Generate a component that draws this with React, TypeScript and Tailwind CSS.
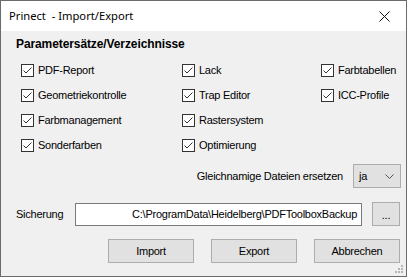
import { useState } from "react";

type Option = { label: string; checked: boolean };

const columns: Option[][] = [
  [
    { label: "PDF-Report", checked: true },
    { label: "Geometriekontrolle", checked: true },
    { label: "Farbmanagement", checked: true },
    { label: "Sonderfarben", checked: true },
  ],
  [
    { label: "Lack", checked: true },
    { label: "Trap Editor", checked: true },
    { label: "Rastersystem", checked: true },
    { label: "Optimierung", checked: true },
  ],
  [
    { label: "Farbtabellen", checked: true },
    { label: "ICC-Profile", checked: true },
  ],
];

function CheckBox({ label, checked }: Option) {
  const [on, setOn] = useState(checked);

  return (
    <label className="flex h-[25px] cursor-default items-center gap-[4px]">
      <span
        onClick={() => setOn(!on)}
        className="flex h-[13px] w-[13px] items-center justify-center border border-[#333333] bg-white"
      >
        {on ? (
          <svg width="11" height="11" viewBox="0 0 11 11">
            <path
              d="M1.5 5.5 L4 8 L9.5 2.5"
              fill="none"
              stroke="#333333"
              strokeWidth="1"
            />
          </svg>
        ) : null}
      </span>
      <span>{label}</span>
    </label>
  );
}

function WinButton({ label, width }: { label: string; width: string }) {
  return (
    <button
      type="button"
      className={`flex h-[24px] ${width} items-center justify-center border border-[#adadad] bg-[#e1e1e1] text-black hover:border-[#0078d7] hover:bg-[#e5f1fb]`}
    >
      {label}
    </button>
  );
}

export default function App() {
  return (
    <div
      className="relative flex h-[277px] w-[407px] flex-col border border-[#6b6b6b] bg-[#f0f0f0] text-[11px] tracking-[-0.25px] text-black"
      style={{ fontFamily: '"Liberation Sans", Arial, sans-serif' }}
    >
      <div className="flex h-[30px] items-center justify-between bg-white pl-[8px] pr-[16px]">
        <span
          className="text-[11.2px] tracking-normal text-black"
          style={{ fontFamily: '"Noto Sans", "Open Sans", sans-serif' }}
        >
          Prinect&nbsp; - Import/Export
        </span>
        <svg width="11" height="11" viewBox="0 0 11 11">
          <path d="M0.5 0.5 L10.5 10.5 M10.5 0.5 L0.5 10.5" stroke="#111111" strokeWidth="1" />
        </svg>
      </div>

      <div className="flex flex-col pl-[15px] pr-[5px] pt-[6px]">
        <h2 className="h-[14px] text-[12px] font-bold leading-[14px] tracking-[-0.1px]">
          Parametersätze/Verzeichnisse
        </h2>

        <div className="ml-[5px] mt-[7px] grid grid-cols-[161px_139px_auto]">
          {columns.map((col, i) => (
            <div key={i} className="flex flex-col">
              {col.map((opt) => (
                <CheckBox key={opt.label} {...opt} />
              ))}
            </div>
          ))}
        </div>

        <div className="mt-[6px] flex items-center justify-end gap-[10px]">
          <span>Gleichnamige Dateien ersetzen</span>
          <div className="flex h-[24px] w-[48px] items-center justify-between border border-[#adadad] bg-[#e1e1e1] pl-[5px] pr-[6px]">
            <span>ja</span>
            <svg width="9" height="5" viewBox="0 0 9 5">
              <path d="M0.5 0.5 L4.5 4.5 L8.5 0.5" fill="none" stroke="#555555" strokeWidth="1" />
            </svg>
          </div>
        </div>

        <div className="mt-[14px] flex items-center">
          <span className="w-[59px]">Sicherung</span>
          <div className="flex h-[23px] w-[287px] items-center justify-end border border-[#7a7a7a] bg-white pr-[4px]">
            C:\ProgramData\Heidelberg\PDFToolboxBackup
          </div>
          <button
            type="button"
            className="ml-[10px] flex h-[24px] w-[28px] items-center justify-center border border-[#adadad] bg-[#e1e1e1] pt-[2px]"
          >
            ...
          </button>
        </div>

        <div className="mt-[13px] flex justify-end gap-[17px] pr-[1px]">
          <WinButton label="Import" width="w-[86px]" />
          <WinButton label="Export" width="w-[86px]" />
          <WinButton label="Abbrechen" width="w-[86px]" />
        </div>
      </div>

      <svg
        className="absolute bottom-[2px] right-[2px]"
        width="10"
        height="10"
        viewBox="0 0 10 10"
        fill="#b5b5b5"
      >
        <rect x="7" y="1" width="2" height="2" />
        <rect x="4" y="4" width="2" height="2" />
        <rect x="7" y="4" width="2" height="2" />
        <rect x="1" y="7" width="2" height="2" />
        <rect x="4" y="7" width="2" height="2" />
        <rect x="7" y="7" width="2" height="2" />
      </svg>
    </div>
  );
}
